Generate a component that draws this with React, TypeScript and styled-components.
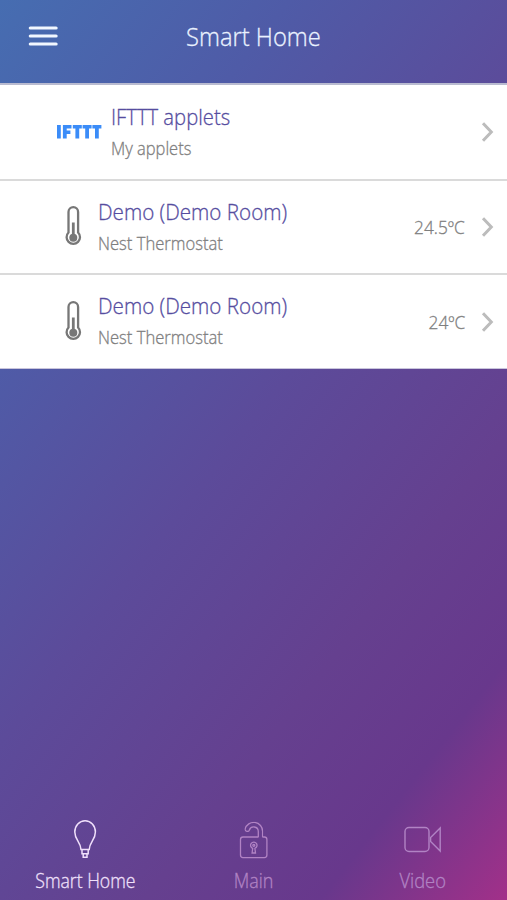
import React from "react";
import styled, { createGlobalStyle } from "styled-components";

const GlobalStyle = createGlobalStyle`
  html, body { margin: 0; padding: 0; }
  body { font-family: "Open Sans", "Noto Sans", sans-serif; font-weight: 300; }
  * { box-sizing: border-box; }
`;

const Screen = styled.div`
  width: 507px;
  height: 900px;
  display: flex;
  flex-direction: column;
  overflow: hidden;
  background: linear-gradient(128deg, #466db1 0%, #4f5ba7 24%, #5c4b9a 48%, #65408f 70%, #68388c 84.5%, #a23089 100%);
`;

const Header = styled.header`
  height: 83px;
  display: grid;
  grid-template-columns: 86px 1fr 86px;
  align-items: center;
  padding-bottom: 11px;
`;

const MenuButton = styled.button`
  border: 0;
  padding: 0;
  background: none;
  display: flex;
  justify-content: center;
`;

const Label = styled.span<{ $size: number; $stretch: number; $color: string; $origin?: string }>`
  display: block;
  white-space: nowrap;
  font-size: ${(p) => p.$size}px;
  line-height: 30px;
  color: ${(p) => p.$color};
  -webkit-text-stroke: 0.3px currentColor;
  transform: scaleX(${(p) => p.$stretch});
  transform-origin: ${(p) => p.$origin ?? "left"} center;
`;

const Title = styled.h1`
  margin: 0;
  font-weight: 300;
  display: flex;
  justify-content: center;
`;

const List = styled.main`
  background: #fff;
  border-top: 2px solid #b9bbd0;
  border-bottom: 1px solid #c9c5dc;
`;

const Row = styled.div`
  height: 94px;
  display: flex;
  align-items: center;
  padding-right: 13px;
  border-bottom: 2px solid #dadada;
  &:first-child { height: 96px; }
  &:last-child { border-bottom: 0; height: 93px; }
`;

const IconSlot = styled.div<{ $width: number; $left: number }>`
  width: ${(p) => p.$width}px;
  padding-left: ${(p) => p.$left}px;
  flex: none;
  display: flex;
`;

const RowText = styled.div`
  flex: 1;
  min-width: 0;
  display: grid;
  gap: 2px;
  padding-bottom: 1px;
`;

const Chevron = styled.svg`
  flex: none;
  margin-left: 16px;
`;

const Spacer = styled.div`
  flex: 1;
`;

const TabBar = styled.nav`
  height: 84px;
  padding-left: 1px;
  display: grid;
  grid-template-columns: repeat(3, 1fr);
`;

const Tab = styled.div<{ $active?: boolean }>`
  display: flex;
  flex-direction: column;
  align-items: center;
  color: ${(p) => (p.$active ? "#f0e0fb" : "#b183c4")};
  svg { display: block; margin-bottom: 4px; }
`;

const Thermometer = () => (
  <svg width="18" height="42" viewBox="0 0 18 42" fill="none">
    <path d="M4.500 26.500V6a4.800 4.800 0 0 1 9.600 0v20.500a6.700 6.700 0 1 1-9.600 0Z" stroke="#777" strokeWidth="2.300" />
    <path d="M9.300 16.500v14" stroke="#777" strokeWidth="2.800" />
    <circle cx="9.300" cy="31.800" r="4" fill="#777" />
  </svg>
);

const IftttMark = () => (
  <svg width="46" height="14" viewBox="0 0 46 14" fill="#3b8cf8">
    <path d="M0 0h3.800v13.600H0zM5.900 0h8.600v3.500H9.700v2h3.700v3.400H9.700v4.700H5.900zM15.800 0h9v3.600h-2.600v10h-3.800v-10h-2.600zM25.600 0h9v3.600H32v10h-3.800v-10h-2.600zM35.400 0h9v3.600h-2.600v10H38v-10h-2.600z" />
  </svg>
);

const devices = [
  { name: "Demo (Demo Room)", kind: "Nest Thermostat", value: "24.5ºC" },
  { name: "Demo (Demo Room)", kind: "Nest Thermostat", value: "24ºC" },
];

const Arrow = () => (
  <Chevron width="13" height="20" viewBox="0 0 13 20" fill="none" stroke="#bcbcbc" strokeWidth="3">
    <path d="M2 1.200 10.300 10 2 18.800" />
  </Chevron>
);

export default function App() {
  return (
    <>
      <GlobalStyle />
      <Screen>
        <Header>
          <MenuButton aria-label="Menu">
            <svg width="30" height="22" viewBox="0 0 30 22" stroke="#f1f7ff" strokeWidth="3.200" strokeLinecap="round">
              <path d="M2.300 3h25.800M2.300 11h25.800M2.300 19h25.800" />
            </svg>
          </MenuButton>
          <Title>
            <Label $size={25.5} $stretch={0.93} $color="#eaf2ff" $origin="center">Smart Home</Label>
          </Title>
        </Header>
        <List>
          <Row>
            <IconSlot $width={111} $left={57}><IftttMark /></IconSlot>
            <RowText>
              <Label $size={22} $stretch={0.92} $color="#564d9f">IFTTT applets</Label>
              <Label $size={18} $stretch={0.915} $color="#7e7e7e">My applets</Label>
            </RowText>
            <Arrow />
          </Row>
          {devices.map((d) => (
            <Row key={d.value}>
              <IconSlot $width={98} $left={64}><Thermometer /></IconSlot>
              <RowText>
                <Label $size={22} $stretch={0.938} $color="#564d9f">{d.name}</Label>
                <Label $size={18} $stretch={0.923} $color="#7e7e7e">{d.kind}</Label>
              </RowText>
              <Label $size={18} $stretch={0.96} $color="#7e7e7e" $origin="right">{d.value}</Label>
              <Arrow />
            </Row>
          ))}
        </List>
        <Spacer />
        <TabBar>
          <Tab $active>
            <svg width="44" height="46" viewBox="0 0 44 46" fill="none" stroke="currentColor" strokeWidth="1.500">
              <path d="M18 33.500c-.3-7.500-6.200-9.500-6.200-17.500a10.300 11.300 0 0 1 20.600 0c0 8-5.900 10-6.200 17.500ZM19 34v3.800h6.200V34M20.200 38v3.200h3.800V38" />
            </svg>
            <Label $size={19.5} $stretch={0.905} $color="currentColor" $origin="center">Smart Home</Label>
          </Tab>
          <Tab>
            <svg width="44" height="46" viewBox="0 0 44 46" fill="none" stroke="currentColor" strokeWidth="1.300">
              <path d="M26.300 26.300v-10.800a4.600 4.600 0 0 0-9-1.300c-.7 2-4.600 1.500-4.200-1.200a8.900 8.900 0 0 1 17.500 2.500V26.300" clipPath="inset(0 0 5px 0)" />
              <path d="M26.300 21H11a2.500 2.500 0 0 0-2.500 2.500v15.600a2.500 2.500 0 0 0 2.500 2.500h21.400a2.500 2.500 0 0 0 2.500-2.500V23.500a2.500 2.500 0 0 0-2.500-2.500h-1.800" />
              <path d="M20.700 32.300a3.200 3.200 0 1 1 2.200 0l.6 4.700h-3.400Z" />
              <circle cx="21.800" cy="29.300" r="1" />
            </svg>
            <Label $size={19.5} $stretch={0.92} $color="currentColor" $origin="center">Main</Label>
          </Tab>
          <Tab>
            <svg width="44" height="46" viewBox="0 0 44 46" fill="none" stroke="currentColor" strokeWidth="1.400">
              <rect x="4" y="11.500" width="24" height="24" rx="4" />
              <path d="M39.200 12v23L29.600 25.500v-4Z" />
            </svg>
            <Label $size={19.5} $stretch={0.94} $color="currentColor" $origin="center">Video</Label>
          </Tab>
        </TabBar>
      </Screen>
    </>
  );
}
